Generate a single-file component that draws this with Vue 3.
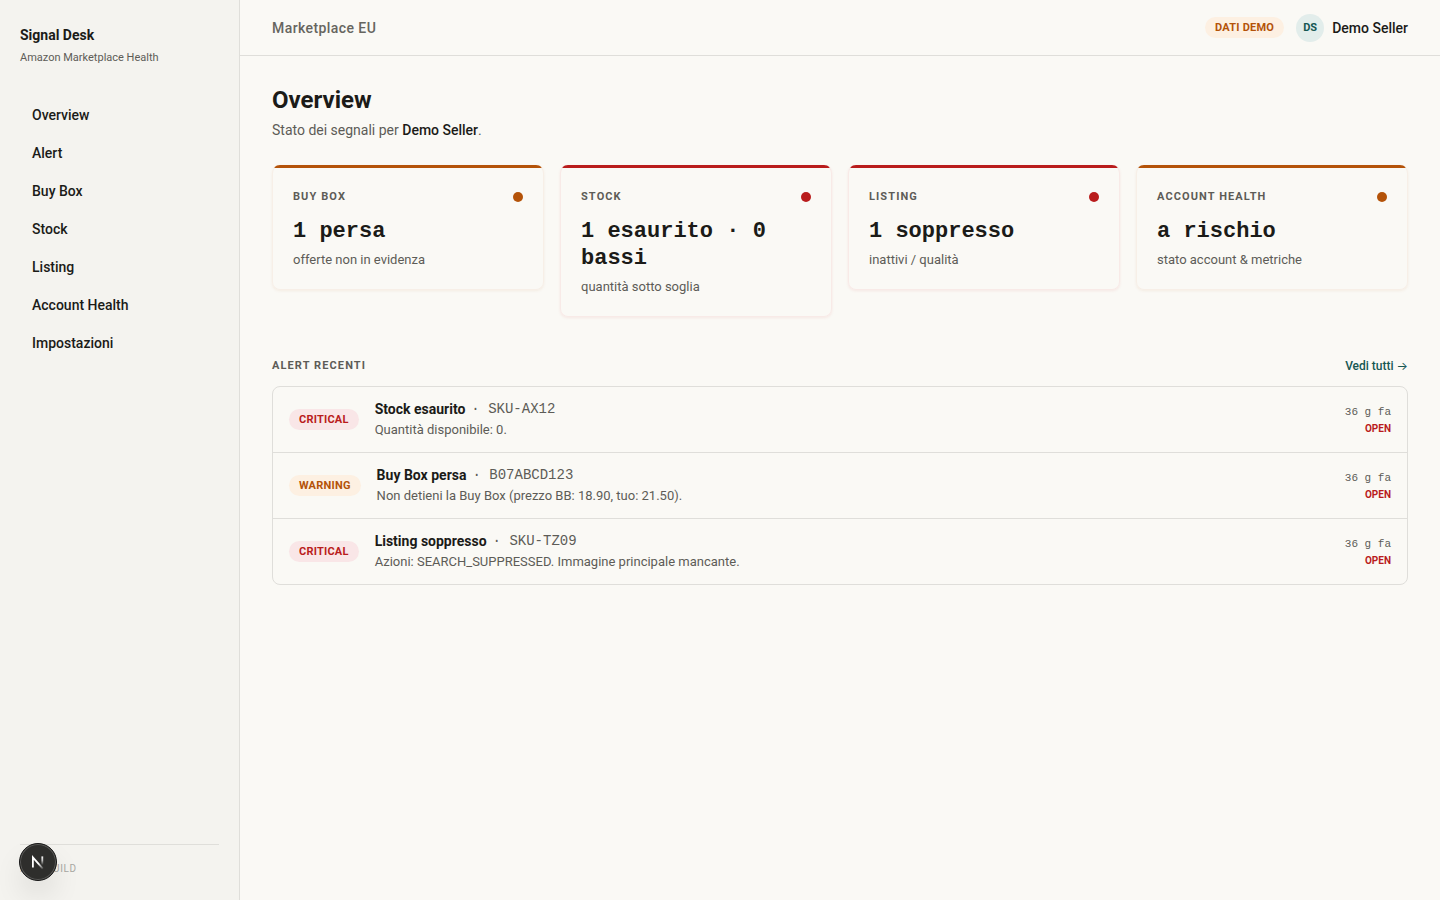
<script setup>
const nav = ['Overview', 'Alert', 'Buy Box', 'Stock', 'Listing', 'Account Health', 'Impostazioni']

const cards = [
  { label: 'Buy Box', value: '1 persa', note: 'offerte non in evidenza', tone: 'warning' },
  { label: 'Stock', value: '1 esaurito · 0 bassi', note: 'quantità sotto soglia', tone: 'critical' },
  { label: 'Listing', value: '1 soppresso', note: 'inattivi / qualità', tone: 'critical' },
  { label: 'Account Health', value: 'a rischio', note: 'stato account & metriche', tone: 'warning' },
]

const alerts = [
  { level: 'critical', title: 'Stock esaurito', code: 'SKU-AX12', text: 'Quantità disponibile: 0.' },
  { level: 'warning', title: 'Buy Box persa', code: 'B07ABCD123', text: 'Non detieni la Buy Box (prezzo BB: 18.90, tuo: 21.50).' },
  { level: 'critical', title: 'Listing soppresso', code: 'SKU-TZ09', text: 'Azioni: SEARCH_SUPPRESSED. Immagine principale mancante.' },
]
</script>

<template>
  <div class="app">
    <aside class="sidebar">
      <div class="brand">
        <strong class="brand-name">Signal Desk</strong>
        <span class="brand-sub">Amazon Marketplace Health</span>
      </div>
      <nav class="nav">
        <a v-for="item in nav" :key="item" href="#" class="nav-link">{{ item }}</a>
      </nav>
      <div class="build">MVP build</div>
    </aside>

    <div class="page">
      <header class="topbar">
        <span class="market">Marketplace EU</span>
        <div class="account">
          <span class="pill warning">Dati demo</span>
          <span class="avatar">DS</span>
          <span class="seller">Demo Seller</span>
        </div>
      </header>

      <main class="main">
        <h1 class="title">Overview</h1>
        <p class="subtitle">Stato dei segnali per <span class="strong">Demo Seller</span>.</p>

        <section class="cards">
          <article v-for="card in cards" :key="card.label" class="card" :class="card.tone">
            <div class="card-head">
              <h2 class="eyebrow">{{ card.label }}</h2>
              <span class="dot"></span>
            </div>
            <div class="card-value">{{ card.value }}</div>
            <div class="card-note">{{ card.note }}</div>
          </article>
        </section>

        <section>
          <div class="section-head">
            <h2 class="eyebrow">Alert recenti</h2>
            <a href="#" class="more">Vedi tutti <span class="arrow">→</span></a>
          </div>
          <ul class="alerts">
            <li v-for="alert in alerts" :key="alert.code" class="alert">
              <span class="pill" :class="alert.level">{{ alert.level }}</span>
              <div class="alert-body">
                <div class="alert-title">
                  <strong>{{ alert.title }}</strong>
                  <span class="code">· {{ alert.code }}</span>
                </div>
                <div class="alert-text">{{ alert.text }}</div>
              </div>
              <div class="alert-meta">
                <span class="age">36 g fa</span>
                <span class="state">Open</span>
              </div>
            </li>
          </ul>
        </section>
      </main>
    </div>

    <button class="devtools" type="button" aria-label="Next.js Dev Tools">
      <svg width="36" height="36" viewBox="0 0 36 36" fill="none" aria-hidden="true">
        <defs>
          <linearGradient id="nStem" x1="0" y1="12" x2="0" y2="21" gradientUnits="userSpaceOnUse">
            <stop offset="0" stop-color="#fff" />
            <stop offset="0.5" stop-color="#fff" stop-opacity="0.7" />
            <stop offset="1" stop-color="#fff" stop-opacity="0" />
          </linearGradient>
          <linearGradient id="nDiag" x1="13" y1="12" x2="23" y2="24" gradientUnits="userSpaceOnUse">
            <stop offset="0.6" stop-color="#fff" />
            <stop offset="1" stop-color="#fff" stop-opacity="0.2" />
          </linearGradient>
        </defs>
        <path d="M12.9 23.6V13.4L22.8 24.6" stroke="url(#nDiag)" stroke-width="1.8" />
        <path d="M22.3 12.4v9" stroke="url(#nStem)" stroke-width="1.8" />
      </svg>
    </button>
  </div>
</template>

<style>
body {
  background: #faf9f5;
}
</style>

<style scoped>
.app {
  display: flex;
  min-height: 100vh;
  background: #faf9f5;
  color: #1b1b18;
  font-family: Roboto, "Liberation Sans", sans-serif;
  font-size: 14px;
  line-height: 20px;
}
h1, h2, p, ul {
  margin: 0;
  padding: 0;
}
a {
  color: inherit;
  text-decoration: none;
}
.sidebar {
  box-sizing: border-box;
  flex: 0 0 240px;
  display: flex;
  flex-direction: column;
  padding: 25px 20px 23px;
  background: #f4f3ef;
  border-right: 1px solid #dfdeda;
}
.brand {
  display: flex;
  flex-direction: column;
  gap: 4px;
}
.brand-name {
  font-size: 14px;
}
.brand-sub {
  font-size: 11px;
  line-height: 18px;
  color: #5d5c57;
}
.nav {
  display: flex;
  flex-direction: column;
  gap: 2px;
  margin-top: 30px;
}
.nav-link {
  padding: 8px 12px;
  font-weight: 500;
}
.build {
  margin-top: auto;
  padding-top: 16px;
  border-top: 1px solid #dfdeda;
  font-size: 10px;
  line-height: 16px;
  letter-spacing: 0.06em;
  text-transform: uppercase;
  color: #a9a8a3;
}
.page {
  flex: 1;
  min-width: 0;
}
.topbar {
  display: flex;
  align-items: center;
  justify-content: space-between;
  box-sizing: border-box;
  height: 56px;
  padding: 0 32px;
  border-bottom: 1px solid #dfdeda;
}
.market {
  font-weight: 500;
  letter-spacing: 0.03em;
  color: #66655f;
}
.account {
  display: flex;
  align-items: center;
}
.avatar {
  width: 28px;
  margin: 0 8px 0 12px;
  border-radius: 50%;
  background: #e2edeb;
  color: #155752;
  font-size: 11px;
  font-weight: 700;
  line-height: 28px;
  text-align: center;
}
.seller,
.strong {
  font-weight: 500;
  color: #1b1b18;
}
.pill {
  padding: 2px 10px;
  border-radius: 12px;
  font-size: 11px;
  font-weight: 700;
  line-height: 17px;
  letter-spacing: 0.02em;
  text-transform: uppercase;
}
.pill.warning {
  background: #fdf0e2;
  color: #b45309;
}
.pill.critical {
  background: #f9e6e7;
  color: #b91c1c;
}
.main {
  padding: 32px;
}
.title {
  font-size: 24px;
  line-height: 24px;
}
.subtitle {
  margin-top: 8px;
  line-height: 21px;
  color: #5d5c57;
}
.cards {
  display: grid;
  grid-template-columns: repeat(4, 1fr);
  align-items: start;
  gap: 16px;
  margin: 24px 0 37px;
}
.card {
  padding: 22px 20px 19px;
  border: 1px solid #f7efe7;
  border-top-color: transparent;
  border-radius: 8px;
  background: linear-gradient(#b45309, #b45309) border-box top / 100% 3px no-repeat;
  box-shadow: 0 1px 3px rgba(180, 83, 9, 0.08);
}
.card.critical {
  border-color: transparent #f8eae7 #f8eae7;
  background-image: linear-gradient(#b91c1c, #b91c1c);
  box-shadow: 0 1px 3px rgba(185, 28, 28, 0.08);
}
.card-head,
.section-head {
  display: flex;
  align-items: center;
  justify-content: space-between;
}
.eyebrow {
  font-size: 11px;
  font-weight: 700;
  line-height: 18px;
  letter-spacing: 0.1em;
  text-transform: uppercase;
  color: #5d5c57;
}
.dot {
  width: 10px;
  height: 10px;
  border-radius: 50%;
  background: #b45309;
}
.critical .dot {
  background: #b91c1c;
}
.card-value {
  margin: 12px 0 4px;
  font-family: "Liberation Mono", monospace;
  font-size: 22px;
  font-weight: 700;
  line-height: 27px;
}
.card-note {
  font-size: 13px;
  line-height: 21px;
  color: #5d5c57;
}
.section-head {
  line-height: 24px;
}
.more {
  font-size: 12px;
  font-weight: 500;
  color: #155752;
}
.arrow {
  font-family: Inter, sans-serif;
  font-weight: 400;
}
.alerts {
  margin-top: 8px;
  border: 1px solid #dfdeda;
  border-radius: 8px;
  list-style: none;
}
.alert {
  display: flex;
  align-items: center;
  gap: 16px;
  padding: 12px 16px;
}
.alert + .alert {
  border-top: 1px solid #dfdeda;
}
.alert-body {
  flex: 1;
  min-width: 0;
}
.alert-title {
  display: flex;
  gap: 6px;
}
.code,
.age {
  font-family: "Liberation Mono", monospace;
  color: #5d5c57;
}
.alert-text {
  font-size: 13px;
  line-height: 21px;
  color: #5d5c57;
}
.alert-meta {
  display: flex;
  flex-direction: column;
  text-align: right;
}
.age {
  font-size: 11px;
  line-height: 18px;
}
.state {
  font-size: 10px;
  font-weight: 700;
  line-height: 16px;
  text-transform: uppercase;
  color: #b91c1c;
}
.devtools {
  position: fixed;
  left: 19px;
  bottom: 19px;
  box-sizing: border-box;
  width: 38px;
  height: 38px;
  padding: 0;
  border: 1px solid #171717;
  border-radius: 50%;
  background: #2e2e2c;
  box-shadow: inset 0 0 0 1px #5a5a58, 0 16px 32px -8px rgba(0, 0, 0, 0.24);
}
.devtools svg {
  display: block;
}
</style>
